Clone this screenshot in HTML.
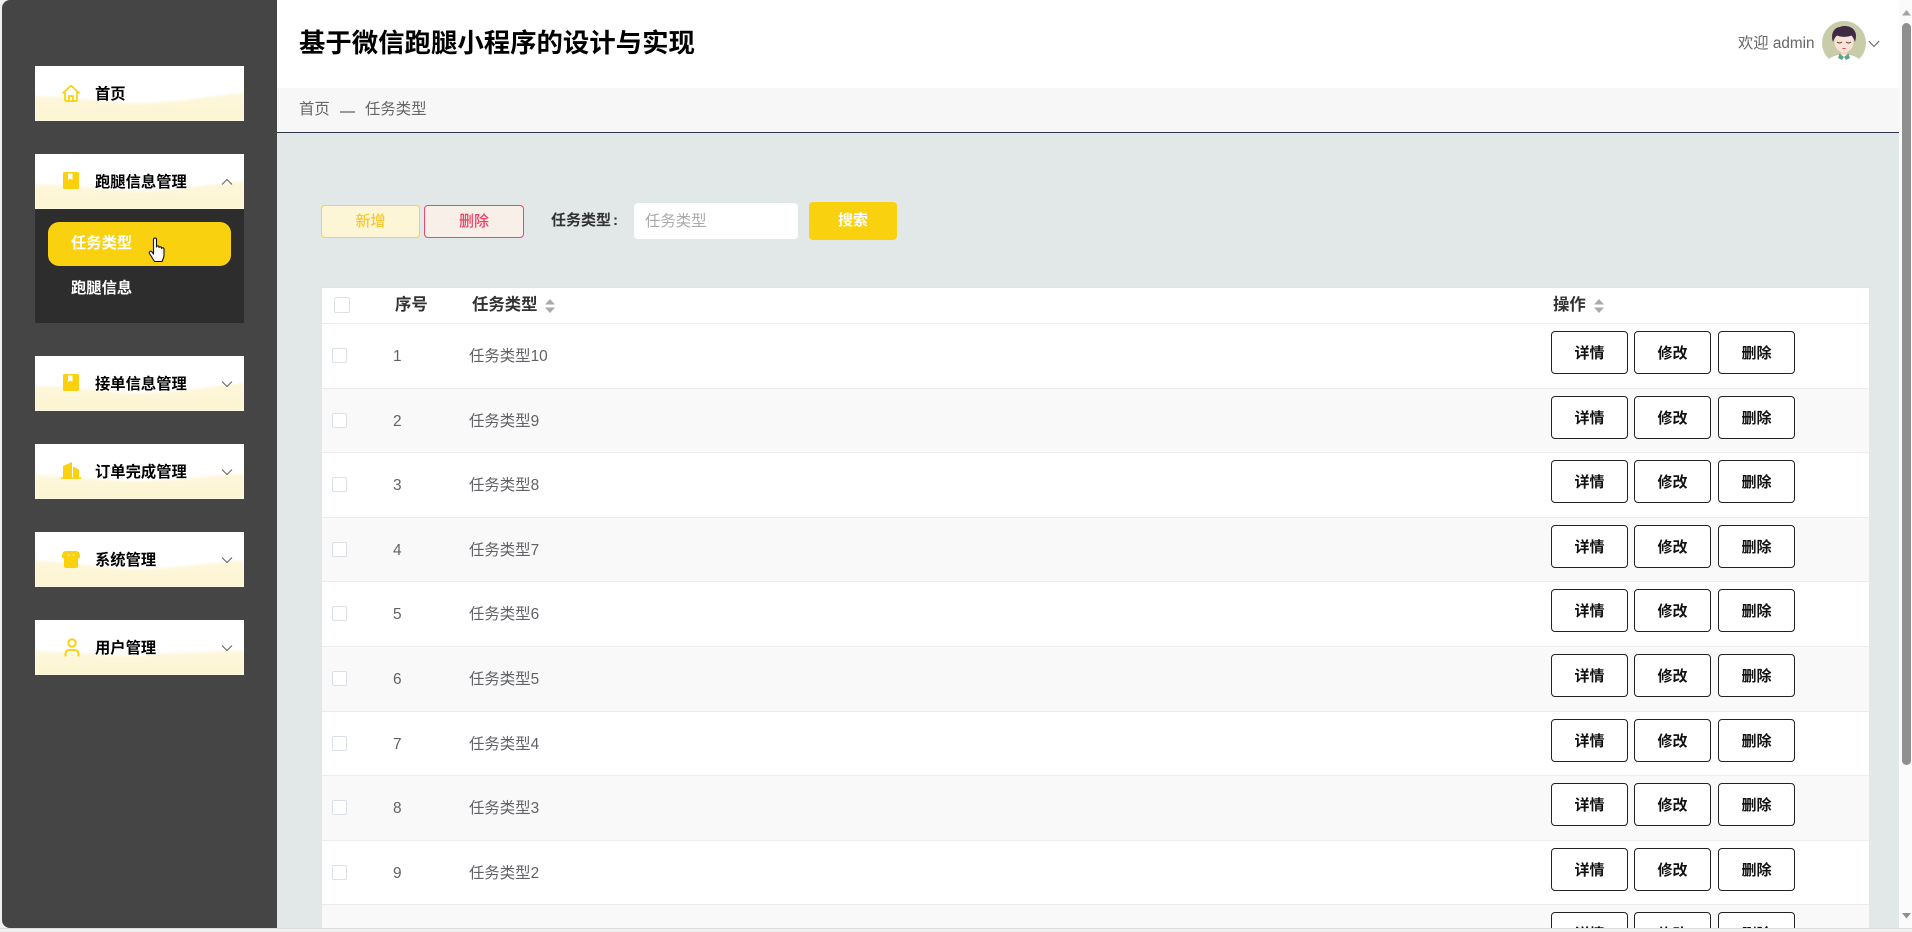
<!DOCTYPE html>
<html lang="zh-CN">
<head>
<meta charset="utf-8">
<title>任务类型</title>
<style>
*{box-sizing:border-box;margin:0;padding:0}
html,body{width:1912px;height:932px;overflow:hidden;background:#f1f1f1}
body{font-family:"Liberation Sans","Noto Sans CJK SC",sans-serif;position:relative}
.abs,.win,.side,.card,.sub,.r,.b,.ck,.t{position:absolute}
.win{left:2px;top:0;width:1897px;height:928px;overflow:hidden;background:#e2e7e8;border-radius:8px 0 0 8px}
.side{left:0;top:0;width:275px;height:928px;background:#454545}
.card{left:33px;width:209px;height:55px;background:#fff;overflow:hidden}
.card svg.w{position:absolute;left:0;top:0;filter:blur(1.3px)}
.card svg.i{position:absolute;left:27px;top:17px}
.card span{position:absolute;left:60px;top:1px;line-height:55px;font-size:15.3px;font-weight:700;color:#000;white-space:nowrap}
.card svg.c{position:absolute;left:186px;top:24px}
.sub{left:33px;top:209px;width:209px;height:114px;background:#2d2d2d}
.t{white-space:nowrap}
.r{left:320px;width:1547px;height:64.6px;border-bottom:1px solid #ececec;background:#fff}
.r.e{background:#f9f9f9}
.ck{left:10px;width:15px;height:15px;border:1px solid #dcdfe6;border-radius:2px;background:#fff;top:24px}
.n{position:absolute;left:71px;top:0;line-height:65px;font-size:15.4px;color:#606266}
.y{position:absolute;left:147px;top:0;line-height:65px;font-size:15.4px;color:#606266;white-space:nowrap}
.b{top:7px;width:77px;height:43px;border:1px solid #222;border-radius:4px;background:#fff;font-size:15px;font-weight:700;color:#111;text-align:center;line-height:43px}
.b1{left:1229px}.b2{left:1312px}.b3{left:1396px}
.sort{position:absolute;width:10px;height:14px}
</style>
</head>
<body>
<svg class="abs" style="left:0;top:0" width="0" height="0"><defs><linearGradient id="wg" x1="0" y1="0" x2="0" y2="1"><stop offset="0" stop-color="#fdf7dc"/><stop offset="1" stop-color="#fcf4cf"/></linearGradient></defs></svg>
<div class="win">
  <div class="abs" style="left:275px;top:0;width:1622px;height:88px;background:#fff"></div>
  <div class="abs" style="left:275px;top:88px;width:1622px;height:45px;background:#f7f7f7;border-bottom:1px solid #2d3748"></div>
  <div class="t" style="left:297px;top:23px;font-size:26.4px;line-height:40px;font-weight:700;color:#000">基于微信跑腿小程序的设计与实现</div>
  <div class="t" style="left:297px;top:99px;font-size:15.4px;line-height:22px;color:#666">首页</div>
  <div class="abs" style="left:338px;top:111px;width:15px;height:1.5px;background:#999"></div>
  <div class="t" style="left:363px;top:99px;font-size:15.4px;line-height:22px;color:#666">任务类型</div>

  <div class="t" style="left:1736px;top:33px;font-size:15.3px;line-height:22px;color:#666">欢迎 admin</div>
  <svg class="abs" style="left:1820px;top:21px" width="44" height="44" viewBox="0 0 44 44">
    <defs><clipPath id="av"><circle cx="22" cy="22" r="22"/></clipPath></defs>
    <g clip-path="url(#av)">
      <rect width="44" height="44" fill="#c9cca8"/>
      <path d="M2 44C6 36 14 34 22 33 30 34 38 36 42 44Z" fill="#fff"/>
      <path d="M17.500 32.500 22 36 26.500 32.500 28 37 24 39 22 36 20 39 16 37Z" fill="#5fa48c"/>
      <rect x="19" y="27" width="6" height="7" fill="#f4d6c4"/>
      <ellipse cx="22" cy="21" rx="9.500" ry="10.500" fill="#f9e2d6"/>
      <path d="M11 21C8 12 13 6 18 6 22 4 29 5 32 9 35 13 34 17 33 21 32 18 31 16 29.500 14.500 25 16.500 18 16 15 14.500 13 16 12 18 11 21Z" fill="#3e2a42"/>
      <path d="M15 21Q17.500 23 20 21M24 21Q26.500 23 29 21" stroke="#5a4040" stroke-width="1" fill="none"/>
      <path d="M19.800 27Q22 29.200 24.200 27Z" fill="#e0505a"/>
    </g>
  </svg>
  <svg class="abs" style="left:1866px;top:40px" width="12" height="8" viewBox="0 0 12 8"><path d="M.8 1 6 6.500 11.200 1" fill="none" stroke="#666" stroke-width="1.100"/></svg>

  <div class="abs" style="left:319px;top:205px;width:99px;height:33px;background:#fdf6d6;border:1px solid #f6d34b;border-radius:4px;text-align:center;font-size:15px;line-height:31px;font-weight:500;color:#f7c92e">新增</div>
  <div class="abs" style="left:422px;top:205px;width:100px;height:33px;background:#f8efe9;border:1px solid #e94b6f;border-radius:4px;text-align:center;font-size:15px;line-height:31px;font-weight:500;color:#ef3f65">删除</div>
  <div class="t" style="left:549px;top:210px;font-size:15px;line-height:22px;font-weight:700;color:#333">任务类型<span style="margin-left:2px">:</span></div>
  <div class="abs" style="left:632px;top:203px;width:164px;height:36px;background:#fff;border-radius:4px"></div>
  <div class="t" style="left:643px;top:211px;font-size:15.4px;line-height:22px;color:#aaa">任务类型</div>
  <div class="abs" style="left:807px;top:202px;width:88px;height:38px;background:#f9d10f;border-radius:4px;text-align:center;font-size:15px;font-weight:700;line-height:37px;color:#fff">搜索</div>

  <div class="abs" style="left:320px;top:287px;width:1547px;height:37px;background:#fff;border-top:1px solid #dfe3e3;border-bottom:1px solid #ececec">
    <div class="abs" style="left:12px;top:9px;width:16px;height:16px;border:1px solid #dcdfe6;border-radius:2px"></div>
    <div class="t" style="left:73px;top:6px;font-size:16.4px;line-height:23px;font-weight:700;color:#333">序号</div>
    <div class="t" style="left:150px;top:6px;font-size:16.4px;line-height:23px;font-weight:700;color:#333">任务类型</div>
    <svg class="sort" style="left:223px;top:11px" viewBox="0 0 10 14"><path d="M5 0 10 5.500H0ZM5 14 0 8.500H10Z" fill="#aaa"/></svg>
    <div class="t" style="left:1231px;top:6px;font-size:16.4px;line-height:23px;font-weight:700;color:#333">操作</div>
    <svg class="sort" style="left:1272px;top:11px" viewBox="0 0 10 14"><path d="M5 0 10 5.500H0ZM5 14 0 8.500H10Z" fill="#aaa"/></svg>
  </div>

  <div class="r" style="top:324px"><div class="ck"></div><div class="n">1</div><div class="y">任务类型10</div><div class="b b1">详情</div><div class="b b2">修改</div><div class="b b3">删除</div></div>
  <div class="r e" style="top:388.600px"><div class="ck"></div><div class="n">2</div><div class="y">任务类型9</div><div class="b b1">详情</div><div class="b b2">修改</div><div class="b b3">删除</div></div>
  <div class="r" style="top:453.200px"><div class="ck"></div><div class="n">3</div><div class="y">任务类型8</div><div class="b b1">详情</div><div class="b b2">修改</div><div class="b b3">删除</div></div>
  <div class="r e" style="top:517.800px"><div class="ck"></div><div class="n">4</div><div class="y">任务类型7</div><div class="b b1">详情</div><div class="b b2">修改</div><div class="b b3">删除</div></div>
  <div class="r" style="top:582.400px"><div class="ck"></div><div class="n">5</div><div class="y">任务类型6</div><div class="b b1">详情</div><div class="b b2">修改</div><div class="b b3">删除</div></div>
  <div class="r e" style="top:647px"><div class="ck"></div><div class="n">6</div><div class="y">任务类型5</div><div class="b b1">详情</div><div class="b b2">修改</div><div class="b b3">删除</div></div>
  <div class="r" style="top:711.600px"><div class="ck"></div><div class="n">7</div><div class="y">任务类型4</div><div class="b b1">详情</div><div class="b b2">修改</div><div class="b b3">删除</div></div>
  <div class="r e" style="top:776.200px"><div class="ck"></div><div class="n">8</div><div class="y">任务类型3</div><div class="b b1">详情</div><div class="b b2">修改</div><div class="b b3">删除</div></div>
  <div class="r" style="top:840.800px"><div class="ck"></div><div class="n">9</div><div class="y">任务类型2</div><div class="b b1">详情</div><div class="b b2">修改</div><div class="b b3">删除</div></div>
  <div class="r e" style="top:905.400px"><div class="ck"></div><div class="n">10</div><div class="y">任务类型1</div><div class="b b1">详情</div><div class="b b2">修改</div><div class="b b3">删除</div></div>

  <div class="side">
    <div class="card" style="top:66px">
      <svg class="w" width="209" height="55" viewBox="0 0 209 55"><path d="M-5 30C40 30 75 38 108 37 145 36 170 31 214 26V60H-5Z" fill="url(#wg)"/></svg>
      <svg class="i" style="top:18px" width="18" height="18" viewBox="0 0 18 18"><path d="M1 9 9 1.500 17 9M3 8V15.500Q3 17 4.500 17H13.500Q15 17 15 15.500V8M7 17V12H11V17" fill="none" stroke="#f9d10f" stroke-width="1.700" stroke-linejoin="round" stroke-linecap="round"/></svg>
      <span>首页</span>
    </div>

    <div class="card" style="top:154px">
      <svg class="w" width="209" height="55" viewBox="0 0 209 55"><path d="M-5 30C40 30 75 38 108 37 145 36 170 31 214 26V60H-5Z" fill="url(#wg)"/></svg>
      <svg class="i" width="18" height="18" viewBox="0 0 18 18"><rect x="1" y="1" width="16" height="17" rx="1.500" fill="#f9d10f"/><path d="M6 2.500H10.500V9L8.250 7.500 6 9Z" fill="#fff"/></svg>
      <span>跑腿信息管理</span>
      <svg class="c" width="12" height="8" viewBox="0 0 12 8"><path d="M1 6.500 6 1.500 11 6.500" fill="none" stroke="#666" stroke-width="1.100"/></svg>
    </div>
    <div class="sub">
      <div class="abs" style="left:13px;top:13px;width:183px;height:44px;background:#f9d10f;border-radius:11px"></div>
      <div class="t" style="left:36px;top:24px;font-size:15.3px;line-height:22px;font-weight:700;color:#fff">任务类型</div>
      <div class="t" style="left:36px;top:68.500px;font-size:15.3px;line-height:22px;font-weight:700;color:#fff">跑腿信息</div>
      <svg class="abs" style="left:113px;top:28px" width="20" height="26" viewBox="0 0 20 26"><path d="M5.500 2.500C5.500.5 8.500.5 8.500 2.500V10C8.500 8.500 11 8.500 11 10V10.500C11 9.500 13.500 9.500 13.500 11V11.500C13.500 10.500 16 10.500 16 12V18C16 21 15 22 14 24.500H6.500L1.500 16.500C.5 14.500 3 13.500 4 15L5.500 17Z" fill="#fff" stroke="#111" stroke-width="1.100" stroke-linejoin="round"/></svg>
    </div>

    <div class="card" style="top:356px">
      <svg class="w" width="209" height="55" viewBox="0 0 209 55"><path d="M-5 30C40 30 75 38 108 37 145 36 170 31 214 26V60H-5Z" fill="url(#wg)"/></svg>
      <svg class="i" width="18" height="18" viewBox="0 0 18 18"><rect x="1" y="1" width="16" height="17" rx="1.500" fill="#f9d10f"/><path d="M6 2.500H10.500V9L8.250 7.500 6 9Z" fill="#fff"/></svg>
      <span>接单信息管理</span>
      <svg class="c" width="12" height="8" viewBox="0 0 12 8"><path d="M1 1.500 6 6.500 11 1.500" fill="none" stroke="#666" stroke-width="1.100"/></svg>
    </div>

    <div class="card" style="top:444px">
      <svg class="w" width="209" height="55" viewBox="0 0 209 55"><path d="M-5 31C40 32 75 38 108 37 145 36 170 32 214 29V60H-5Z" fill="url(#wg)"/></svg>
      <svg class="i" style="left:26px" width="20" height="18" viewBox="0 0 20 18"><path d="M2 16.500V5L11 1V16.500ZM12 16.500V5.500L18 8.500V16.500ZM0 16.500H20V18H0Z" fill="#f9d10f"/></svg>
      <span>订单完成管理</span>
      <svg class="c" width="12" height="8" viewBox="0 0 12 8"><path d="M1 1.500 6 6.500 11 1.500" fill="none" stroke="#666" stroke-width="1.100"/></svg>
    </div>

    <div class="card" style="top:532px">
      <svg class="w" width="209" height="55" viewBox="0 0 209 55"><path d="M-5 28C40 30 75 38 108 37 145 36 170 31 214 28V60H-5Z" fill="url(#wg)"/></svg>
      <svg class="i" style="top:19px" width="18" height="17" viewBox="0 0 18 17"><path d="M3.500 0H14.500Q18 .5 18 5.500 18 7 16 7.500V15Q16 17 14 17H4Q2 17 2 15V7.500Q0 7 0 5.500 0 .5 3.500 0Z" fill="#f9d10f"/><circle cx="6.500" cy="4" r="1" fill="#fbe78a"/><circle cx="11.500" cy="4" r="1" fill="#fbe78a"/></svg>
      <span>系统管理</span>
      <svg class="c" width="12" height="8" viewBox="0 0 12 8"><path d="M1 1.500 6 6.500 11 1.500" fill="none" stroke="#666" stroke-width="1.100"/></svg>
    </div>

    <div class="card" style="top:620px">
      <svg class="w" width="209" height="55" viewBox="0 0 209 55"><path d="M-5 31C40 32 75 37 108 35 145 33 170 31 214 31V60H-5Z" fill="url(#wg)"/></svg>
      <svg class="i" style="top:18px;left:29px" width="16" height="19" viewBox="0 0 16 19"><circle cx="8" cy="5" r="3.700" fill="none" stroke="#f9d10f" stroke-width="2"/><path d="M1.500 18.500V16.500Q1.500 12 6 12H10Q14.500 12 14.500 16.500V18.500" fill="none" stroke="#f9d10f" stroke-width="2"/></svg>
      <span>用户管理</span>
      <svg class="c" width="12" height="8" viewBox="0 0 12 8"><path d="M1 1.500 6 6.500 11 1.500" fill="none" stroke="#666" stroke-width="1.100"/></svg>
    </div>
  </div>
</div>

<div class="abs" style="left:1899px;top:0;width:13px;height:932px;background:#fbfbfb"></div>
<div class="abs" style="left:1902px;top:23px;width:9px;height:742px;background:#8f8f8f;border-radius:5px"></div>
<svg class="abs" style="left:1902px;top:10px" width="9" height="6" viewBox="0 0 9 6"><path d="M4.500 0 9 5.500H0Z" fill="#a3a3a3"/></svg>
<svg class="abs" style="left:1902px;top:913px" width="9" height="6" viewBox="0 0 9 6"><path d="M4.500 5.500 0 0H9Z" fill="#8f8f8f"/></svg>
<div class="abs" style="left:0;top:928px;width:1912px;height:4px;background:#f1f1f1;border-top:1px solid #ddd"></div>
</body>
</html>
